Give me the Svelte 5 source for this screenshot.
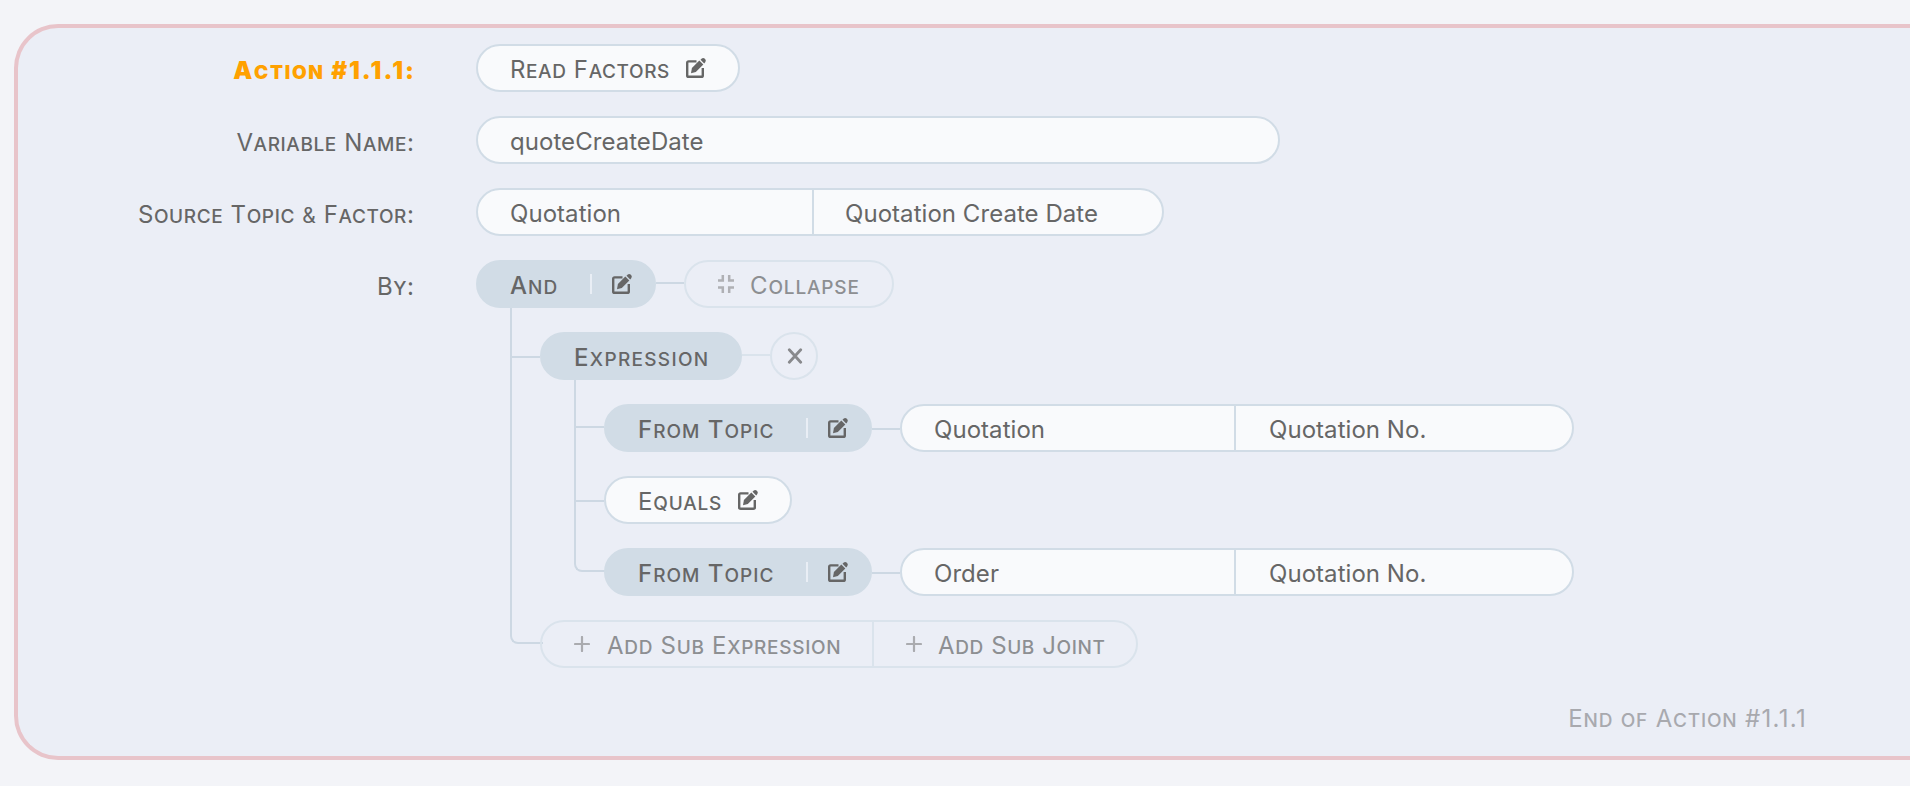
<script>
  const labels = ['Variable Name', 'Source Topic & Factor', 'By'];
</script>

{#snippet caps(text)}
  <span class="caps">{#each text.split(' ') as word, i}{#if i}{' '}{/if}{#if /^[#&]/.test(word)}<span class={word === '&' ? 'amp' : 'full'}>{word}</span>{:else if /^[a-z]/.test(word)}<span class="low">{word}</span>{:else}<span class="word">{word}</span>{/if}{/each}</span>
{/snippet}

{#snippet edit()}
  <svg class="edit" viewBox="0 0 20 20" width="20" height="20">
    <path d="M10.500 3.400H2.600Q1.200 3.400 1.200 4.800V17.400Q1.200 18.800 2.600 18.800H15.400Q16.800 18.800 16.800 17.400V10" fill="none" stroke="currentColor" stroke-width="2.400" />
    <path d="M13.300 2.600L17.300 6.600L9.800 14.100L5 15.200L5.900 10.100Z" fill="currentColor" />
    <path d="M14.500 1.700L15.800 0.500Q17.300 -0.600 18.900 0.800Q20.500 2.400 19.400 4L18.200 5.400Z" fill="currentColor" />
  </svg>
{/snippet}

{#snippet plus()}
  <svg class="plus" viewBox="0 0 16 16" width="16" height="16"><path d="M8 1V15M1 8H15" stroke="currentColor" stroke-width="2.200" stroke-linecap="round" /></svg>
{/snippet}

{#snippet pair(a, b)}
  <div class="pill field pair"><span class="first">{a}</span><span class="second">{b}</span></div>
{/snippet}

<main>
  <section class="panel">
    <div class="label action">{@render caps('Action #1.1.1')}<span>:</span></div>
    <div class="pill field read">{@render caps('Read Factors')}{@render edit()}</div>

    <div class="label">{@render caps(labels[0])}<span>:</span></div>
    <div class="pill field name">quoteCreateDate</div>

    <div class="label">{@render caps(labels[1])}<span>:</span></div>
    <div class="source">{@render pair('Quotation', 'Quotation Create Date')}</div>

    <div class="label">{@render caps(labels[2])}<span>:</span></div>
    <div class="tree">
      <div class="line">
        <div class="pill solid and">{@render caps('And')}<i class="bar"></i>{@render edit()}</div>
        <i class="link high"></i>
        <div class="pill ghost collapse">
          <svg viewBox="0 0 16 18" width="16" height="18"><path d="M0 5.500H4.800V0M11.200 0V5.500H16M0 12.500H4.800V18M11.200 18V12.500H16" fill="none" stroke="currentColor" stroke-width="2.500" /></svg>
          {@render caps('Collapse')}
        </div>
      </div>
      <div class="children outer">
        <div class="node expression">
          <div class="line">
            <div class="pill solid expr">{@render caps('Expression')}</div>
            <i class="link faint"></i>
            <div class="pill ghost remove">
              <svg viewBox="0 0 16 16" width="16" height="16"><path d="M2.300 1.800L13.700 14.200M13.700 1.800L2.300 14.200" stroke="currentColor" stroke-width="2.800" stroke-linecap="round" /></svg>
            </div>
          </div>
          <div class="children inner">
            <div class="node line up">
              <div class="pill solid topic">{@render caps('From Topic')}<i class="bar"></i>{@render edit()}</div>
              <i class="link"></i>
              {@render pair('Quotation', 'Quotation No.')}
            </div>
            <div class="node line">
              <div class="pill field equals">{@render caps('Equals')}{@render edit()}</div>
            </div>
            <div class="node line last">
              <div class="pill solid topic">{@render caps('From Topic')}<i class="bar"></i>{@render edit()}</div>
              <i class="link"></i>
              {@render pair('Order', 'Quotation No.')}
            </div>
          </div>
        </div>
        <div class="node line last">
          <div class="pill ghost add">
            <div class="first">{@render plus()}{@render caps('Add Sub Expression')}</div>
            <div class="second">{@render plus()}{@render caps('Add Sub Joint')}</div>
          </div>
        </div>
      </div>
    </div>

    <footer>{@render caps('End of Action #1.1.1')}</footer>
  </section>
</main>

<style>
  :global(body) { background: #f3f4f8; overflow: hidden; }
  * { box-sizing: border-box; }
  main {
    width: 1910px; height: 786px; padding: 24px 0 26px 14px; overflow: hidden;
    background: #f3f4f8; color: #666; font-family: Inter, sans-serif;
    font-size: 24px; line-height: 48px; letter-spacing: 0.05px; white-space: nowrap;
  }
  .panel {
    height: 736px; padding: 16px 0 0; border: 4px solid #e8c4ca; border-right: 0;
    border-radius: 44px 0 0 44px; background: #ebeef6;
    display: grid; grid-template-columns: 396px 1fr; grid-template-rows: 48px 48px 48px 408px 48px;
    column-gap: 62px; row-gap: 24px;
  }
  .label { display: flex; justify-content: flex-end; padding: 3px 0 0; }
  .word, .low { display: inline-block; font-size: 19px; font-weight: 450; text-transform: uppercase; line-height: 48px; }
  .word::first-letter { font-size: 24px; font-weight: 400; line-height: 48px; }
  .caps { display: inline-block; height: 48px; line-height: 48px; letter-spacing: 0.600px; }
  .full { letter-spacing: 1.300px; }
  .amp { font-size: 21px; }
  .action { color: #ffa100; font-weight: 900; }
  .action .word { font-weight: 900; }
  .action .word::first-letter { font-weight: 900; }
  .action .caps { letter-spacing: 1.700px; }
  .action .full { letter-spacing: 2px; }
  .pill { height: 48px; border: 2px solid #d1dce6; border-radius: 24px; display: flex; align-items: center; padding: 3px 0 0 32px; flex: none; }
  .field { background: #f9fafc; }
  .solid { background: #d1dce6; font-weight: 500; padding-right: 22px; }
  .solid .word { font-weight: 550; }
  .solid .word::first-letter { font-weight: 500; }
  .solid .caps { letter-spacing: 1px; }
  .ghost { border-color: #dae3ec; color: #8d8f92; }
  .edit { flex: none; overflow: visible; margin-top: -3px; }
  .read { width: 264px; justify-content: space-between; padding-right: 32px; }
  .name { width: 804px; }
  .pair { width: 674px; }
  .source .pair { width: 688px; }
  .pair .first { width: 300px; }
  .source .pair .first { width: 302px; }
  .pair .second, .add .second { border-left: 2px solid #d1dce6; height: 44px; line-height: 47px; margin-top: -3px; padding-left: 33px; }
  .source .pair .second { padding-left: 31px; }
  .line { display: flex; }
  .and { width: 180px; }
  .topic { width: 268px; }
  .bar { width: 2px; height: 20px; background: #e9eef5; margin: -3px 20px 0 auto; }
  .link { width: 28px; height: 2px; margin-top: 24px; background: #cdd8e3; }
  .link.high { margin-top: 22px; }
  .link.faint { margin-top: 22px; background: #dae3ec; }
  .collapse { width: 210px; gap: 16px; }
  .collapse .caps { letter-spacing: 0.850px; }
  .collapse svg { margin-top: -3px; color: #afb0b4; }
  .children { position: relative; display: flex; flex-direction: column; gap: 24px; padding: 24px 0 0 64px; }
  .node { position: relative; }
  .children::before {
    content: ''; position: absolute; left: 34px; top: 0; bottom: 24px; width: 31px;
    border: solid #cdd8e3; border-width: 0 0 2px 2px; border-radius: 0 0 0 8px;
  }
  .inner::before { width: 30px; }
  .node:not(.last)::before { content: ''; position: absolute; left: -28px; top: 24px; width: 28px; height: 2px; background: #cdd8e3; }
  .node.up::before { top: 22px; }
  .expr { width: 202px; }
  .expr .caps { letter-spacing: 1.300px; }
  .remove { width: 48px; padding: 0 0 0 2px; justify-content: center; }
  .remove svg { color: #88898c; }
  .equals { width: 188px; justify-content: space-between; padding-right: 32px; }
  .equals .caps { letter-spacing: 0.800px; }
  .add { width: 598px; }
  .add .first, .add .second { display: flex; align-items: center; gap: 17px; }
  .add .first { width: 298px; }
  .add .second { border-color: #dae3ec; padding-left: 32px; padding-top: 3px; gap: 16px; }
  .add .first .caps { letter-spacing: 0.700px; }
  .add .second .caps { letter-spacing: 0.600px; }
  .plus { margin-top: -4px; color: #aaabaf; flex: none; }
  footer { grid-column: 1 / -1; text-align: right; padding: 3px 103px 0 0; color: #a8a9ae; }
  footer .caps { letter-spacing: 0.800px; }
  footer .full { letter-spacing: 1.300px; }
</style>
